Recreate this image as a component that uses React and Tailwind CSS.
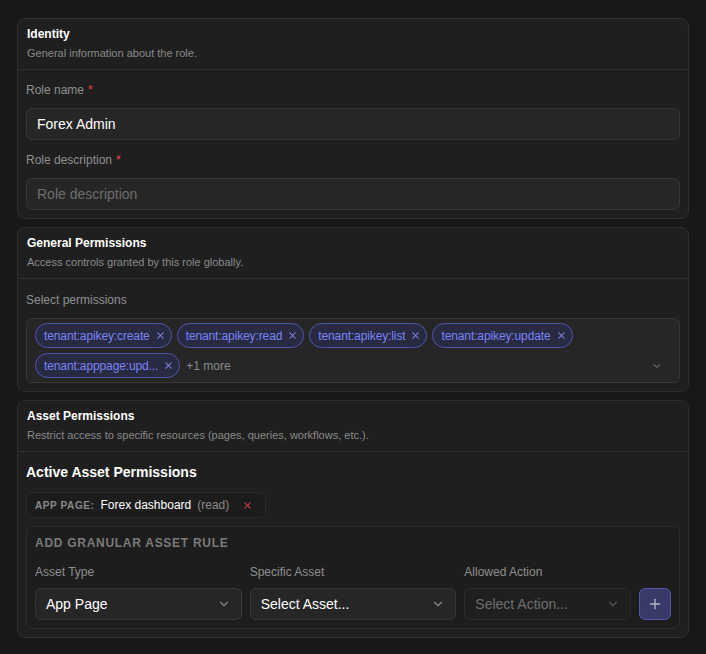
import { ChevronDown, X, Plus } from "lucide-react";

const Card = ({ title, subtitle, children }) => (
  <div className="rounded-lg border border-[#2f2f2f] bg-[#1f1f1f]">
    <div className="border-b border-[#2f2f2f] px-[9px] pt-[7px] pb-[8px]">
      <h3 className="text-xs font-bold leading-4 text-white">{title}</h3>
      <p className="mt-[3px] text-[11px] leading-4 text-[#8a8a8a]">{subtitle}</p>
    </div>
    {children}
  </div>
);

const Label = ({ children, required }) => (
  <label className="block text-xs leading-4 text-[#8f8f8f]">
    {children}
    {required && <span className="ml-1 text-[#ef4444]">*</span>}
  </label>
);

const Chip = ({ text }) => (
  <span className="flex h-[25px] items-center gap-[5px] rounded-full border border-[#4f55ad] bg-[#282a42] pl-[8px] pr-[5px] text-xs tracking-[-0.01em] text-[#7b84f7]">
    {text}
    <X size={11} strokeWidth={2.2} className="text-[#8c93f5]" />
  </span>
);

const SelectBox = ({ value, placeholder, muted }) => (
  <div
    className={`flex h-8 items-center justify-between rounded-md border px-[10px] text-sm ${
      muted
        ? "border-[#2c2c2c] bg-[#1f1f1f] text-[#6f6f6f]"
        : "border-[#363636] bg-[#262626] text-white"
    }`}
  >
    <span>{value || placeholder}</span>
    <ChevronDown size={14} className={muted ? "text-[#555]" : "text-[#8a8a8a]"} />
  </div>
);

export default function App() {
  const permissions = [
    "tenant:apikey:create",
    "tenant:apikey:read",
    "tenant:apikey:list",
    "tenant:apikey:update",
    "tenant:apppage:upd...",
  ];

  return (
    <div
      className="min-h-[654px] bg-[#181818] pt-[18px] pl-[17px] pr-[17px] pb-4"
      style={{ fontFamily: '"Liberation Sans", Arial, sans-serif' }}
    >
      <div className="flex w-[672px] flex-col gap-2">
        <Card title="Identity" subtitle="General information about the role.">
          <div className="px-[8px] pt-3 pb-2">
            <Label required>Role name</Label>
            <input
              defaultValue="Forex Admin"
              className="mt-2.5 h-8 w-full rounded-md border border-[#363636] bg-[#262626] px-[10px] text-sm text-white outline-none"
            />
            <div className="mt-3">
              <Label required>Role description</Label>
            </div>
            <input
              placeholder="Role description"
              className="mt-2.5 h-8 w-full rounded-md border border-[#363636] bg-[#262626] px-[10px] text-sm text-white outline-none placeholder:text-[#6e6e6e]"
            />
          </div>
        </Card>

        <Card title="General Permissions" subtitle="Access controls granted by this role globally.">
          <div className="px-[8px] pt-[13px] pb-2">
            <Label>Select permissions</Label>
            <div className="mt-2.5 flex items-end justify-between rounded-md border border-[#363636] bg-[#262626] py-1 pl-2 pr-4">
              <div className="flex flex-wrap items-center gap-x-[5px] gap-y-[5px]">
                {permissions.map((p) => (
                  <Chip key={p} text={p} />
                ))}
                <span className="ml-[1px] text-xs text-[#8a8a8a]">+1 more</span>
              </div>
              <ChevronDown size={14} className="mb-[5px] text-[#8a8a8a]" />
            </div>
          </div>
        </Card>

        <Card
          title="Asset Permissions"
          subtitle="Restrict access to specific resources (pages, queries, workflows, etc.)."
        >
          <div className="px-[8px] pt-3 pb-2">
            <h4 className="text-sm font-bold leading-4 text-white">Active Asset Permissions</h4>
            <div className="mt-3 inline-flex h-[26px] items-center rounded-md border border-[#2c2c2c] bg-[#1c1c1c] pl-[8px] pr-[12px]">
              <span className="text-[10px] font-bold tracking-[0.06em] text-[#8a8a8a]">APP PAGE:</span>
              <span className="ml-[6px] text-xs text-white">Forex dashboard</span>
              <span className="ml-[6px] text-xs text-[#8a8a8a]">(read)</span>
              <X size={11} strokeWidth={2.2} className="ml-[13px] text-[#e5484d]" />
            </div>
            <div className="mt-2 rounded-md border border-[#2c2c2c] bg-[#1d1d1d] px-2 pt-2 pb-2">
              <h5 className="text-xs font-bold uppercase leading-4 tracking-[0.06em] text-[#7a7a7a]">
                Add Granular Asset Rule
              </h5>
              <div className="mt-[13px] grid grid-cols-3 gap-2">
                <div>
                  <Label>Asset Type</Label>
                  <div className="mt-2">
                    <SelectBox value="App Page" />
                  </div>
                </div>
                <div>
                  <Label>Specific Asset</Label>
                  <div className="mt-2">
                    <SelectBox value="Select Asset..." />
                  </div>
                </div>
                <div>
                  <Label>Allowed Action</Label>
                  <div className="mt-2 flex gap-2">
                    <div className="flex-1">
                      <SelectBox placeholder="Select Action..." muted />
                    </div>
                    <button className="flex h-8 w-8 items-center justify-center rounded-md border border-[#5257a8] bg-[#383b6a] text-[#b4b6c8]">
                      <Plus size={16} />
                    </button>
                  </div>
                </div>
              </div>
            </div>
          </div>
        </Card>
      </div>
    </div>
  );
}
